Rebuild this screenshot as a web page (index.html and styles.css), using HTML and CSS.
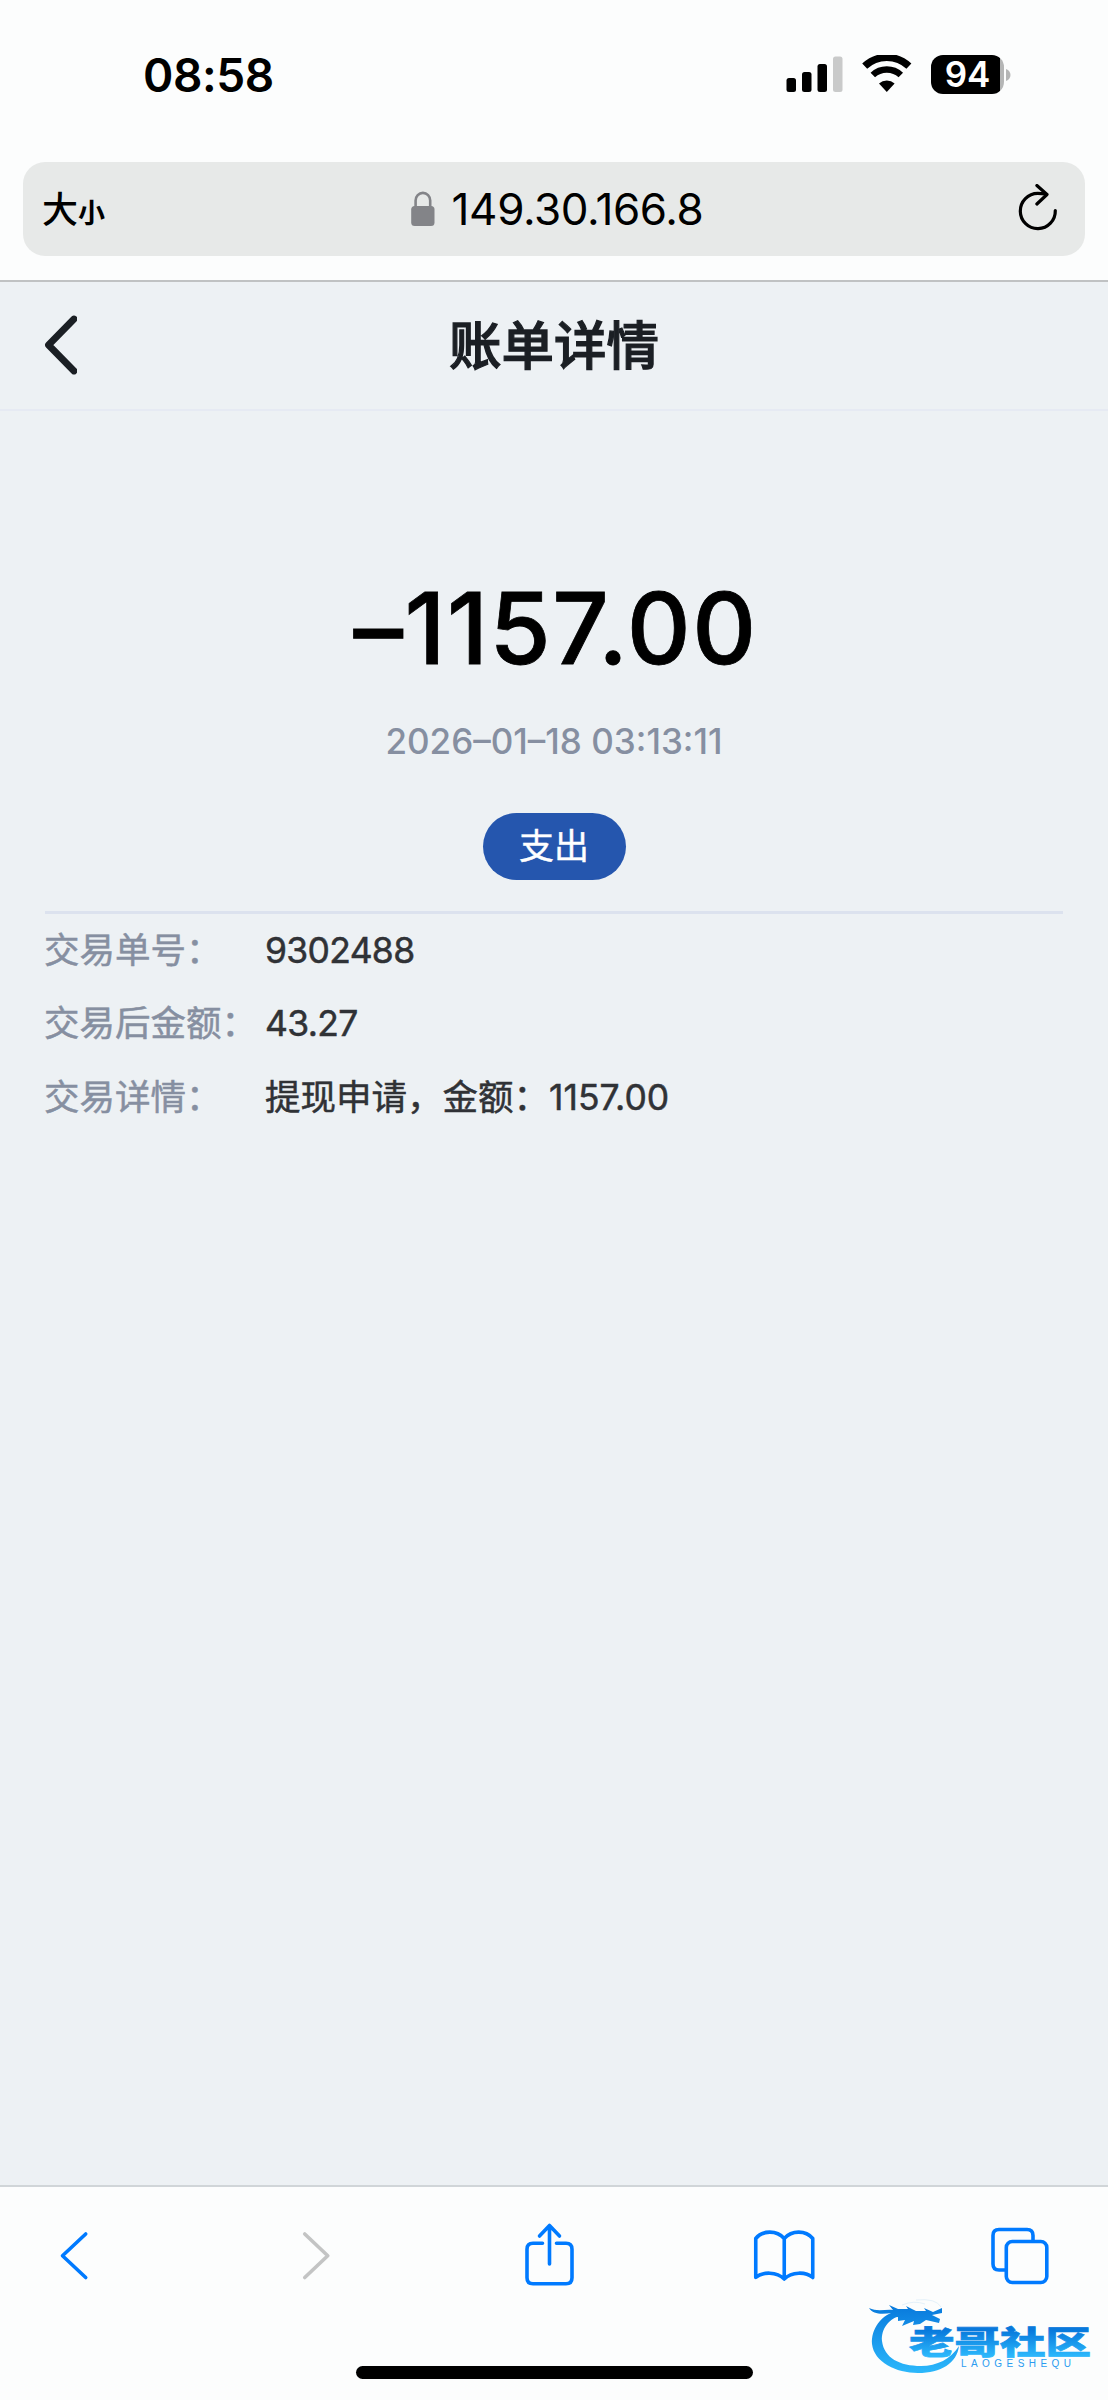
FILE: index.html
```
<!DOCTYPE html>
<html lang="zh-CN">
<head>
    <meta charset="UTF-8">
    <meta name="viewport" content="width=device-width, initial-scale=1.0">
    <title>账单详情</title>
    <link rel="stylesheet" href="styles.css">
</head>
<body>
    <div class="phone">
        <div class="browser-top">
            <div class="status-bar">
                <span class="time">08:58</span>
                <div class="status-icons">
                    <svg class="signal" width="58" height="38" viewBox="0 0 58 38">
                        <rect x="0.5" y="23" width="9.5" height="14" rx="2.5"/>
                        <rect x="16" y="17" width="9.5" height="20" rx="2.5"/>
                        <rect x="31.5" y="9" width="9.5" height="28" rx="2.5"/>
                        <rect x="47" y="1.5" width="9.5" height="35.5" rx="2.5" fill="#c9caca"/>
                    </svg>
                    <svg class="wifi" width="50" height="38" viewBox="0 0 50 38">
                        <path d="M2.7 11.2a32 32 0 0 1 44.2 0" fill="none" stroke="#000" stroke-width="7.2"/>
                        <path d="M10.8 20a20.5 20.5 0 0 1 28 0" fill="none" stroke="#000" stroke-width="6.5"/>
                        <path d="M17 28.5a11.5 11.5 0 0 1 15.6 0L24.8 37z"/>
                    </svg>
                    <div class="battery">
                        <span class="battery-level">94</span>
                        <svg class="battery-tip" width="5" height="14" viewBox="0 0 5 14"><path d="M0 1c6 2 6 10 0 12z" fill="#b5b6b6"/></svg>
                    </div>
                </div>
            </div>
            <div class="address-bar">
                <span class="text-size">大<small>小</small></span>
                <div class="url">
                    <svg width="24" height="36" viewBox="0 0 24 36">
                        <path d="M4.6 16V9.5a7.2 7.5 0 0 1 14.6 0V16" fill="none" stroke="#838488" stroke-width="2.6"/>
                        <rect x="0.2" y="15" width="23.3" height="20" rx="3.5" fill="#838488"/>
                    </svg>
                    <span>149.30.166.8</span>
                </div>
                <svg class="reload" width="40" height="50" viewBox="0 0 40 50" fill="none" stroke="#000" stroke-width="3.2" stroke-linecap="round" stroke-linejoin="round">
                    <path d="M37.3 26.5a17.5 17.7 0 1 1-17.5-17.2q4 0 7.5.7"/>
                    <path d="M18.9 1.5L29 10.5L18.9 20"/>
                </svg>
            </div>
        </div>

        <div class="page">
            <div class="nav">
                <svg class="nav-back" width="34" height="62" viewBox="0 0 34 62">
                    <path d="M31 4L5.5 30L31 56" fill="none" stroke="#1b1f24" stroke-width="6.8" stroke-linecap="round" stroke-linejoin="round"/>
                </svg>
                <h1>账单详情</h1>
            </div>

            <div class="summary">
                <div class="amount">–1157.00</div>
                <div class="date">2026–01–18 03:13:11</div>
                <span class="tag">支出</span>
            </div>

            <div class="details">
                <div class="row">
                    <span class="label">交易单号：</span>
                    <span class="value number">9302488</span>
                </div>
                <div class="row">
                    <span class="label">交易后金额：</span>
                    <span class="value number">43.27</span>
                </div>
                <div class="row">
                    <span class="label">交易详情：</span>
                    <span class="value">提现申请，金额：1157.00</span>
                </div>
            </div>
        </div>

        <div class="toolbar">
            <div class="toolbar-icons">
                <svg viewBox="43 2216 62 76"><path d="M85.7 2234L62.5 2255.8L85.7 2277.5"/></svg>
                <svg class="disabled" viewBox="279.75 2216 62 76"><path d="M304.5 2234L327.5 2255.8L304.5 2277.5"/></svg>
                <svg viewBox="516.5 2215 62 76">
                    <path d="M542 2242.3h-9.5q-6 0-6 6v28.5q0 6 6 6h33q6 0 6-6v-28.5q0-6-6-6h-9.5"/>
                    <path d="M549 2225.5v37.5M539 2235l10-10.5l10 10.5"/>
                </svg>
                <svg viewBox="753.25 2216 62 76">
                    <path d="M784.5 2238.5C777 2230 763 2230 756 2238.5V2277.5C763 2271.5 777 2271.5 784.5 2279C792 2271.5 806 2271.5 813 2277.5V2238.5C806 2230 792 2230 784.5 2238.5V2279"/>
                </svg>
                <svg viewBox="990.5 2216 62 76">
                    <path d="M1033.5 2241v-5.5q0-6-6-6h-28q-6 0-6 6v28.5q0 6 6 6h6"/>
                    <rect x="1006.8" y="2241.5" width="40.5" height="41" rx="6"/>
                </svg>
            </div>
            <div class="home-bar"></div>
            <svg class="watermark" width="228" height="80" viewBox="866 2297 228 80">
                <defs>
                    <linearGradient id="blue" gradientUnits="userSpaceOnUse" x1="0" y1="2305" x2="0" y2="2372">
                        <stop offset="0" stop-color="#0879dc"/>
                        <stop offset="1" stop-color="#2bb7fb"/>
                    </linearGradient>
                    <linearGradient id="blue-text" x1="0" y1="0" x2="0" y2="1">
                        <stop offset="0.3" stop-color="#0879dc"/>
                        <stop offset="0.85" stop-color="#2bb7fb"/>
                    </linearGradient>
                </defs>
                <g fill="url(#blue)">
                    <path d="M900 2310C880 2314 871 2330 872 2344C874 2362 896 2373 918 2373C941 2373 957 2363 959 2346C951 2359 937 2366 921 2366C900 2366 884 2358 882 2341C881 2329 889 2318 902 2315z"/>
                    <path d="M869 2308C877 2312 886 2309 893 2310L889 2305L898 2309L908 2309L906 2306L916 2311L926 2311L924 2308L933 2312L942 2308L942 2313L932 2315L940 2319L939 2323L926 2320L920 2324L913 2325L914 2321L902 2326L905 2320L898 2321L898 2317L888 2318L892 2313C883 2314 873 2315 869 2308z"/>
                </g>
                <path d="M902 2305q12-5 23-1M916 2300q20-2 25 7" fill="none" stroke="#e4f1fa" stroke-width="1"/>
                <text class="mark-name" transform="translate(909 2353.5) scale(1 0.74)" textLength="182" lengthAdjust="spacingAndGlyphs" fill="url(#blue-text)" stroke="url(#blue-text)">老哥社区</text>
                <text class="mark-latin" x="961" y="2366.5" textLength="110">LAOGESHEQU</text>
            </svg>
        </div>
    </div>
</body>
</html>
```
FILE: styles.css
```
* {
    box-sizing: border-box;
}

body {
    margin: 0;
    background-color: #edf1f4;
    color: #000;
    font-family: Inter, "Noto Sans CJK SC", sans-serif;
}

svg {
    display: block;
    flex-shrink: 0;
}

.phone {
    width: 1108px;
    height: 2400px;
    display: flex;
    flex-direction: column;
}

/* browser chrome */
.browser-top {
    height: 282px;
    background-color: #fcfdfd;
    border-bottom: 2px solid #c0c2c3;
}

.status-bar {
    height: 162px;
    padding: 54px 97px 0 143px;
    display: flex;
    justify-content: space-between;
    align-items: flex-start;
}

.time {
    font-size: 46px;
    line-height: 42px;
    font-weight: 600;
    letter-spacing: -0.4px;
}

.status-icons {
    display: flex;
    margin-top: 1px;
}

.wifi {
    margin-left: 18px;
}

.battery {
    display: flex;
    align-items: center;
    margin-left: 19px;
}

.battery-level {
    width: 73px;
    height: 39px;
    border-radius: 12px;
    background: linear-gradient(to right, #000 69px, #b5b6b6 69px);
    color: #fff;
    font-size: 35px;
    line-height: 38px;
    font-weight: 600;
    text-align: center;
}

.battery-tip {
    margin-left: 2px;
}

.address-bar {
    height: 94px;
    margin: 0 23px;
    padding: 0 27px 0 19px;
    border-radius: 22px;
    background-color: #e7e9e8;
    display: grid;
    grid-template-columns: 1fr auto 1fr;
    align-items: center;
}

.text-size {
    padding-top: 6px;
    font-size: 36px;
    font-weight: 500;
    line-height: 50px;
}

.text-size small {
    font-size: 27px;
    font-weight: 700;
}

.url {
    display: flex;
    align-items: center;
    gap: 17px;
    padding-left: 9px;
    margin-right: -5px;
    font-size: 44px;
    letter-spacing: -0.4px;
}

.reload {
    justify-self: end;
}

/* page */
.page {
    flex: 1;
}

.nav {
    height: 129px;
    padding: 0 43px;
    border-bottom: 2px solid #e6eaf3;
    display: grid;
    grid-template-columns: 1fr auto 1fr;
    align-items: center;
}

.nav h1 {
    margin: 0;
    color: #1b1f24;
    font-size: 52.5px;
    font-weight: 500;
    line-height: 60px;
    -webkit-text-stroke: 1.2px #1b1f24;
}

.summary {
    margin: 0 45px;
    height: 503px;
    padding-top: 157px;
    border-bottom: 3px solid #dce2ee;
    display: flex;
    flex-direction: column;
    align-items: center;
}

.amount {
    padding-left: 3px;
    font-size: 99px;
    line-height: 120px;
    font-weight: 550;
    letter-spacing: 1.5px;
    -webkit-text-stroke: 0.8px #000;
}

.date {
    margin-top: 32px;
    color: #868fa1;
    font-size: 35px;
    line-height: 42px;
    font-weight: 450;
}

.tag {
    margin-top: 51px;
    width: 143px;
    height: 67px;
    border-radius: 34px;
    background-color: #2556ae;
    color: #fff;
    font-size: 35px;
    line-height: 66px;
    text-align: center;
    -webkit-text-stroke: 0.4px #fff;
}

.details {
    margin: 0 44px;
}

.row {
    height: 73.5px;
    display: flex;
    align-items: center;
    font-size: 35.5px;
    line-height: 50px;
}

.label {
    width: 221px;
    color: #868fa1;
    white-space: nowrap;
    -webkit-text-stroke: 0.5px #868fa1;
}

.value {
    color: #303236;
    -webkit-text-stroke: 0.5px #303236;
}

.number {
    letter-spacing: -0.7px;
}

/* bottom toolbar */
.toolbar {
    position: relative;
    height: 215px;
    padding-top: 29px;
    border-top: 2px solid #d0d5d8;
    background-color: #fcfdfd;
}

.toolbar-icons {
    display: flex;
    justify-content: space-between;
    padding: 0 56px 0 43px;
}

.toolbar-icons svg {
    width: 62px;
    height: 76px;
    fill: none;
    stroke: #007aff;
    stroke-width: 3.6;
    stroke-linecap: round;
    stroke-linejoin: round;
}

.toolbar-icons .disabled {
    stroke: #c3c4c4;
}

.home-bar {
    width: 397px;
    height: 13px;
    margin: 74px auto 0;
    border-radius: 7px;
    background-color: #000;
}

.watermark {
    position: absolute;
    right: 14px;
    bottom: 23px;
}

.mark-name {
    font-family: "Noto Sans CJK SC", sans-serif;
    font-size: 43px;
    font-weight: 900;
    stroke-width: 1;
}

.mark-latin {
    font-family: "Liberation Sans", sans-serif;
    font-size: 10px;
    fill: #2a9cf0;
}
```
